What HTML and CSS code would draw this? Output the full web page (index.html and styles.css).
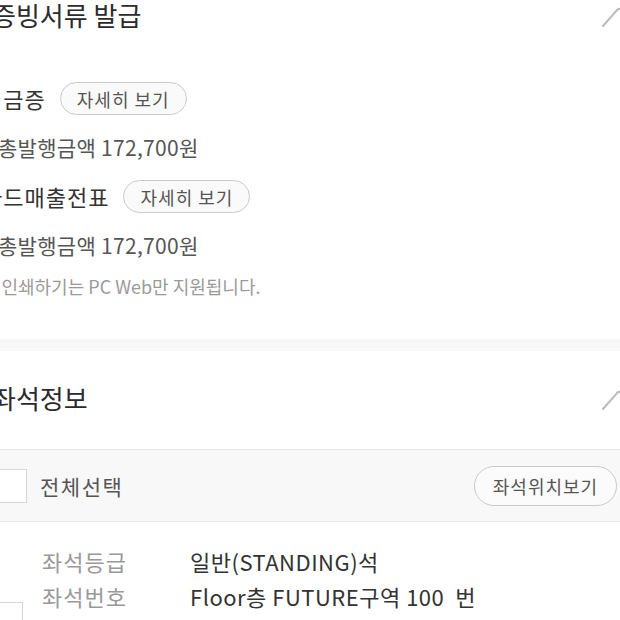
FILE: index.html
```html
<!DOCTYPE html>
<html>
	<head>
		<meta charset="utf-8">
		<title>증빙서류 발급</title>
		<link rel="stylesheet" href="styles.css">
	</head>
	<body>
		<div class="page">
			<div class="section doc">
				<div class="head">
					<h2 class="title">증빙서류 발급</h2>
					<svg class="fold" width="36" height="22" viewBox="0 0 36 22"><path d="M2 20 L16.5 3.5 Q18 2 19.5 3.5 L34 20" fill="none" stroke="#bdbdbd" stroke-width="2" stroke-linecap="round"/></svg>
				</div>
				<div class="doc-row first">
					<span class="doc-name">입금증</span>
					<a class="pill" href="javascript:void(0)">자세히 보기</a>
				</div>
				<p class="amount">총발행금액 172,700원</p>
				<div class="doc-row">
					<span class="doc-name">카드매출전표</span>
					<a class="pill" href="javascript:void(0)">자세히 보기</a>
				</div>
				<p class="amount">총발행금액 172,700원</p>
				<p class="note">* 인쇄하기는 PC Web만 지원됩니다.</p>
			</div>
			<div class="gap"></div>
			<div class="section seat">
				<div class="head seat-head">
					<h2 class="title">좌석정보</h2>
					<svg class="fold" width="36" height="22" viewBox="0 0 36 22"><path d="M2 20 L16.5 3.5 Q18 2 19.5 3.5 L34 20" fill="none" stroke="#bdbdbd" stroke-width="2" stroke-linecap="round"/></svg>
				</div>
				<div class="select-bar">
					<label class="check-all">
						<span class="box"></span>
						<span>전체선택</span>
					</label>
					<a class="pill wide" href="javascript:void(0)">좌석위치보기</a>
				</div>
				<div class="seat-item">
					<span class="box item-box"></span>
					<dl class="seat-info">
						<dt>좌석등급</dt>
						<dd>일반(STANDING)석</dd>
						<dt>좌석번호</dt>
						<dd>Floor층 FUTURE구역 100&nbsp;&nbsp;번</dd>
						<dt>가격</dt>
						<dd>172,700원</dd>
					</dl>
				</div>
			</div>
		</div>
	</body>
</html>
```

FILE: styles.css
```css
*{
	padding: 0;
	margin: 0;
	box-sizing: border-box;
}
a{
	text-decoration: none;
}
html,body{
	width: 100%;
	height: 100%;
	overflow: hidden;
	background: #fff;
}
body{
	font-family: "Noto Sans CJK KR", "Noto Sans", sans-serif;
	color: #333;
}
.page{
	width: 660px;
	margin-left: -20px;
}
.head{
	display: flex;
	align-items: center;
	justify-content: space-between;
	height: 34px;
	padding: 0 3px 0 12px;
}
.title{
	font-size: 26px;
	font-weight: 400;
	color: #2b2b2b;
	line-height: 32px;
	margin-top: -4px;
}
.doc{
	padding-bottom: 42px;
}
.doc-row{
	display: flex;
	align-items: center;
	margin-top: 21px;
	padding-left: 2px;
}
.doc-row.first{
	margin-top: 48px;
}
.doc-name{
	font-size: 22px;
	letter-spacing: 1px;
	line-height: 33px;
	color: #333;
	margin-right: 14px;
}
.pill{
	display: inline-flex;
	align-items: center;
	justify-content: center;
	width: 127px;
	height: 33px;
	border: 1px solid #cacaca;
	border-radius: 20px;
	background: #fafafa;
	font-size: 18px;
	letter-spacing: 1px;
	color: #555;
}
.amount{
	margin-top: 20px;
	padding-left: 18px;
	font-size: 21px;
	letter-spacing: 0.3px;
	line-height: 24px;
	color: #555;
}
.note{
	margin-top: 18px;
	padding-left: 9px;
	font-size: 18px;
	line-height: 22px;
	color: #9a9a9a;
}
.gap{
	height: 12px;
	background: #f8f8f8;
}
.seat-head{
	height: 98px;
}
.select-bar{
	display: flex;
	align-items: center;
	justify-content: space-between;
	height: 73px;
	padding: 0 23px 0 13px;
	background: #f8f8f8;
	border-top: 1px solid #e6e6e6;
	border-bottom: 1px solid #e6e6e6;
}
.check-all{
	display: flex;
	align-items: center;
	gap: 13px;
	font-size: 21px;
	letter-spacing: 1.5px;
	color: #555;
}
.box{
	display: block;
	width: 34px;
	height: 34px;
	border: 1px solid #d6d6d6;
	background: #fff;
}
.pill.wide{
	height: 40px;
	width: 143px;
	background: #fbfbfb;
	border-radius: 22px;
}
.seat-item{
	display: flex;
	align-items: flex-start;
	padding: 22px 0 0 9px;
}
.item-box{
	margin-top: 58px;
	flex-shrink: 0;
}
.seat-info{
	display: grid;
	grid-template-columns: 148px 1fr;
	margin-left: 19px;
	font-size: 22px;
	line-height: 35px;
}
.seat-info dt{
	color: #999;
	letter-spacing: 1px;
}
.seat-info dd{
	color: #333;
	letter-spacing: 0.5px;
}
```
